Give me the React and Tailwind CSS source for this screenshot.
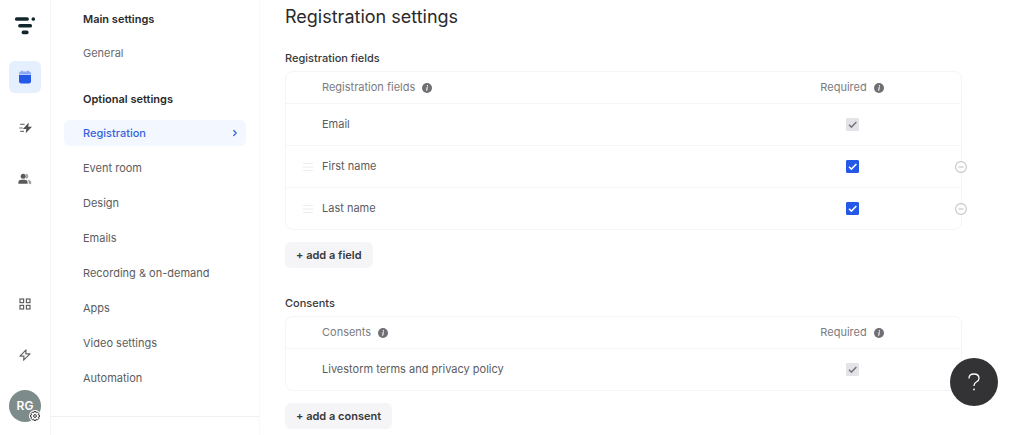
import React, { useState } from "react";
import { ChevronRight } from "lucide-react";

const optionalLinks = [
  "Registration",
  "Event room",
  "Design",
  "Emails",
  "Recording & on-demand",
  "Apps",
  "Video settings",
  "Automation",
];

function Logo() {
  return (
    <svg width="20" height="18" viewBox="0 0 20 18" fill="#12262b" aria-hidden="true">
      <rect x="0" y="0.2" width="13.8" height="3.6" rx="1.6" />
      <rect x="16.6" y="0.2" width="3.4" height="3.6" rx="1.6" />
      <rect x="3.2" y="6.9" width="13.8" height="3.6" rx="1.6" />
      <rect x="6.6" y="13.6" width="7" height="3.6" rx="1.6" />
    </svg>
  );
}

function CalendarIcon() {
  return (
    <svg width="12" height="14" viewBox="0 0 12 14" aria-hidden="true">
      <rect x="2.2" y="0.6" width="1.6" height="2.4" rx="0.6" fill="#8aa9f3" />
      <rect x="8.2" y="0.6" width="1.6" height="2.4" rx="0.6" fill="#8aa9f3" />
      <path d="M0 4.6V3.6Q0 1.6 2 1.6H10Q12 1.6 12 3.6V4.6Z" fill="#8aa9f3" />
      <path d="M0 5H12V11.2Q12 13.4 9.8 13.4H2.2Q0 13.4 0 11.2Z" fill="#2458e6" />
    </svg>
  );
}

function FastBoltIcon() {
  return (
    <svg width="13" height="12" viewBox="0 0 13 12" aria-hidden="true">
      <path d="M1.2 2.4H5.6M0.2 6H3.8M1.2 9.4H5" stroke="#777" strokeWidth="1.2" fill="none" />
      <path d="M9.8 0.6L3.9 7H7.3L6.7 11.2L13 4.7H9.3Z" fill="#505050" />
    </svg>
  );
}

function PeopleIcon() {
  return (
    <svg width="14" height="12" viewBox="0 0 14 12" aria-hidden="true">
      <circle cx="5.2" cy="3.2" r="2.5" fill="#5a5a5a" />
      <path d="M0.4 10.8V9.4Q0.4 6.8 3.4 6.8H6.8Q9.6 6.8 9.6 9.4V10.8Z" fill="#5a5a5a" />
      <path d="M8.2 0.9A2.4 2.4 0 0 1 8.2 5.5Q9.4 3.2 8.2 0.9Z" fill="#999" stroke="#999" strokeWidth="0.7" />
      <path d="M10 6.9Q13 7 13 9.4V10.8H10.9V9.4Q10.9 7.8 10 6.9Z" fill="#999" stroke="#999" strokeWidth="0.3" />
    </svg>
  );
}

function GridIcon() {
  return (
    <svg width="12" height="12" viewBox="0 0 12 12" fill="none" stroke="#5f5f5f" strokeWidth="1.2" aria-hidden="true">
      <rect x="1" y="1" width="3.6" height="3.6" />
      <rect x="7.4" y="1" width="3.6" height="3.6" />
      <rect x="1" y="7.4" width="3.6" height="3.6" />
      <rect x="7.4" y="7.4" width="3.6" height="3.6" />
    </svg>
  );
}

function BoltIcon() {
  return (
    <svg width="12" height="12" viewBox="0 0 12 12" fill="none" stroke="#666" strokeWidth="1.2" strokeLinejoin="round" aria-hidden="true">
      <path d="M7 0.8L1 7.2H5L4.6 11.2L11 4.8H6.8Z" />
    </svg>
  );
}

function GearIcon() {
  return (
    <svg width="10" height="10" viewBox="0 0 20 20" fill="none" stroke="#333" strokeWidth="2" strokeLinejoin="round" className="shrink-0" aria-hidden="true">
      <path d="M8.2 1H11.8L12.4 3.6L15.1 2.3L17.7 4.9L16.4 7.6L19 8.2V11.8L16.4 12.4L17.7 15.1L15.1 17.7L12.4 16.4L11.8 19H8.2L7.6 16.4L4.9 17.7L2.3 15.1L3.6 12.4L1 11.8V8.2L3.6 7.6L2.3 4.9L4.9 2.3L7.6 3.6Z" />
      <circle cx="10" cy="10" r="2.8" />
    </svg>
  );
}

function InfoIcon() {
  return (
    <svg width="10" height="10" viewBox="0 0 10 10" className="shrink-0" aria-hidden="true">
      <circle cx="5" cy="5" r="5" fill="#6f6f74" />
      <path d="M5.2 4.3L4.7 7.3M5.5 2.5L5.4 3" stroke="#fff" strokeWidth="1.1" strokeLinecap="round" />
    </svg>
  );
}

function DragIcon() {
  return (
    <svg width="10" height="8" viewBox="0 0 10 8" aria-hidden="true">
      <path d="M0 0.5H10M0 4H10M0 7.5H10" stroke="#ececf0" strokeWidth="1" />
    </svg>
  );
}

function RailButton({ label, active, children }) {
  return (
    <button
      type="button"
      aria-label={label}
      className={`flex size-8 items-center justify-center rounded-md ${active ? "bg-[#e5effe]" : ""}`}
    >
      {children}
    </button>
  );
}

function Check({ label, locked }) {
  const [checked, setChecked] = useState(true);
  return (
    <span className="relative inline-flex size-[13px] align-middle">
      <input
        type="checkbox"
        aria-label={`${label} required`}
        checked={checked}
        disabled={locked}
        onChange={(e) => setChecked(e.target.checked)}
        className="peer size-full appearance-none rounded-[1px] border border-gray-300 checked:border-[#2458e6] checked:bg-[#2458e6] disabled:border-[#e3e3e8] disabled:bg-[#e3e3e8]"
      />
      <svg
        viewBox="0 0 13 13"
        className={`pointer-events-none absolute inset-0 hidden peer-checked:block ${locked ? "text-[#77777c]" : "text-white"}`}
        aria-hidden="true"
      >
        <path d="M3 6.8L5.4 9.1L10.4 4" fill="none" stroke="currentColor" strokeWidth="1.5" />
      </svg>
    </span>
  );
}

function FieldTable({ title, rows }) {
  return (
    <table className="w-full border-separate border-spacing-0 rounded-lg border border-[#f5f5f7] text-[11px]">
      <thead>
        <tr className="h-[31px] text-[#7c7c80]">
          <th scope="col" className="py-0 pl-9 text-left font-normal">
            <span className="flex items-center gap-[7px]">
              {title}
              <InfoIcon />
            </span>
          </th>
          <th scope="col" className="w-[218px] p-0 font-normal">
            <span className="flex items-center justify-center gap-[7px]">
              Required
              <InfoIcon />
            </span>
          </th>
        </tr>
      </thead>
      <tbody>
        {rows.map((row) => (
          <tr key={row.name} className="h-[42px] text-[#5c5c60]">
            <td className="border-t border-[#f5f5f7] p-0">
              <div className="flex items-center">
                <span className="flex w-9 justify-center pl-2">{row.custom && <DragIcon />}</span>
                {row.name}
              </div>
            </td>
            <td className="relative border-t border-[#f5f5f7] p-0 text-center leading-none">
              <Check label={row.name} locked={!row.custom} />
              {row.custom && (
                <button type="button" aria-label={`Remove ${row.name}`} className="absolute inset-y-0 -right-1.5 my-auto size-3">
                  <svg viewBox="0 0 12 12" fill="#fff" stroke="#c4c4c6" aria-hidden="true">
                    <circle cx="6" cy="6" r="5.4" strokeWidth="1.1" />
                    <path d="M3.4 6H8.6" strokeWidth="1.1" />
                  </svg>
                </button>
              )}
            </td>
          </tr>
        ))}
      </tbody>
    </table>
  );
}

function AddButton({ children }) {
  return (
    <button type="button" className="mt-3 h-[26px] rounded-md bg-[#f5f5f8] px-[11px] text-[11px] font-semibold text-[#38383a]">
      {children}
    </button>
  );
}

export default function App() {
  const [current, setCurrent] = useState("Registration");

  return (
    <div className="flex h-screen bg-white font-['Inter',sans-serif] text-[#38383a]">
      {/* Icon rail */}
      <div className="flex w-[51px] shrink-0 flex-col items-center border-r border-[#f5f5f7] pt-[17px] pb-[13px]">
        <a href="#" aria-label="Home" className="mb-[26px]">
          <Logo />
        </a>
        <div className="flex flex-col gap-[19px]">
          <RailButton label="Events" active>
            <CalendarIcon />
          </RailButton>
          <RailButton label="Automations">
            <FastBoltIcon />
          </RailButton>
          <RailButton label="People">
            <PeopleIcon />
          </RailButton>
        </div>
        <div className="mt-auto flex flex-col gap-[19px]">
          <RailButton label="Apps">
            <GridIcon />
          </RailButton>
          <RailButton label="What's new">
            <BoltIcon />
          </RailButton>
          <button type="button" aria-label="Account" className="relative flex size-8 items-center justify-center rounded-full bg-[#7d8c8b] text-xs font-semibold text-white">
            RG
            <span className="absolute right-0 bottom-0 flex size-3 items-center justify-center rounded-full bg-white">
              <GearIcon />
            </span>
          </button>
        </div>
      </div>

      {/* Settings menu */}
      <div className="flex w-[209px] shrink-0 flex-col border-r border-[#f8f8f9] text-[11px]">
        <nav className="flex-1 px-[13px] pt-1.5">
          <h2 className="flex h-[26px] items-center px-[19px] font-semibold text-[#2a2a2c]">Main settings</h2>
          <a href="#" className="mt-2 flex h-[26px] items-center px-[19px] text-[#6a6a6e]">
            General
          </a>
          <h2 className="mt-5 flex h-[26px] items-center px-[19px] font-semibold text-[#2a2a2c]">Optional settings</h2>
          <ul className="mt-2 flex flex-col gap-[9px]">
            {optionalLinks.map((name) => (
              <li key={name}>
                <a
                  href="#"
                  onClick={() => setCurrent(name)}
                  className={`flex h-[26px] items-center justify-between rounded-md pr-1.5 pl-[19px] ${
                    current === name ? "bg-[#f3f7ff] font-medium text-[#3663de]" : "text-[#5c5c60]"
                  }`}
                >
                  {name}
                  {current === name && <ChevronRight size={10} strokeWidth={3} />}
                </a>
              </li>
            ))}
          </ul>
        </nav>
        <div className="h-[19px] border-t border-[#efeff1]" />
      </div>

      {/* Content */}
      <main className="min-w-0 flex-1 overflow-y-auto pt-[5px] pr-[62px] pl-[25px]">
        <h1 className="text-lg leading-6 text-[#2a2a2c]">Registration settings</h1>

        <section className="mt-[21px]">
          <h2 className="mb-[5px] text-[11px] leading-4 font-medium">Registration fields</h2>
          <FieldTable
            title="Registration fields"
            rows={[{ name: "Email" }, { name: "First name", custom: true }, { name: "Last name", custom: true }]}
          />
          <AddButton>+ add a field</AddButton>
        </section>

        <section className="mt-[27px]">
          <h2 className="mb-[5px] text-[11px] leading-4 font-medium">Consents</h2>
          <FieldTable title="Consents" rows={[{ name: "Livestorm terms and privacy policy" }]} />
          <AddButton>+ add a consent</AddButton>
        </section>
      </main>

      <button
        type="button"
        aria-label="Help"
        className="fixed right-[26px] bottom-[29px] flex size-12 items-center justify-center rounded-full bg-[#333335] text-white"
      >
        <svg width="12" height="18" viewBox="0 0 12 18" fill="none" stroke="currentColor" strokeWidth="1.3" aria-hidden="true">
          <path d="M1 5.4Q1 1 6 1Q11 1 11 5.2Q11 7.4 8.6 8.8Q6 10.2 6 12.6V13" />
          <circle cx="6" cy="16.4" r="0.9" fill="currentColor" stroke="none" />
        </svg>
      </button>
    </div>
  );
}
